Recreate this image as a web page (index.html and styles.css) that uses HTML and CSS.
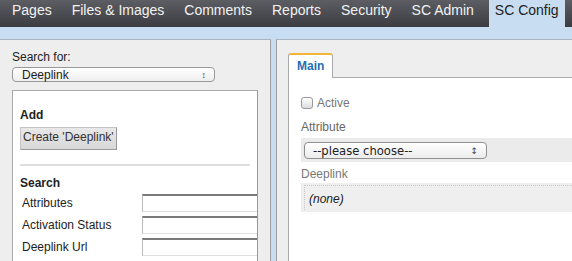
FILE: index.html
```html
<!DOCTYPE html>
<html lang="en">
<head>
    <meta charset="UTF-8">
    <meta name="viewport" content="width=device-width, initial-scale=1.0">
    <title>SC Config</title>
    <link rel="stylesheet" href="styles.css">
</head>
<body>

    <!-- Top navigation -->
    <div class="topnav">
        <a class="nav-item">Pages</a>
        <a class="nav-item">Files &amp; Images</a>
        <a class="nav-item">Comments</a>
        <a class="nav-item">Reports</a>
        <a class="nav-item">Security</a>
        <a class="nav-item">SC Admin</a>
        <a class="nav-item active">SC Config</a>
    </div>

    <div class="workspace">

        <!-- Left: search / add -->
        <div class="panel panel-left">
            <div class="field-label">Search for:</div>
            <div class="mini-select">
                <span>Deeplink</span>
                <span class="arrows">&#8597;</span>
            </div>

            <div class="box">
                <h3>Add</h3>
                <button class="btn">Create 'Deeplink'</button>
                <div class="divider"></div>
                <h3>Search</h3>
                <div class="search-row">
                    <span class="search-label">Attributes</span>
                    <span class="text-input"></span>
                </div>
                <div class="search-row">
                    <span class="search-label">Activation Status</span>
                    <span class="text-input"></span>
                </div>
                <div class="search-row">
                    <span class="search-label">Deeplink Url</span>
                    <span class="text-input"></span>
                </div>
            </div>
        </div>

        <div class="splitter"></div>

        <!-- Right: edit form -->
        <div class="panel panel-right">
            <div class="tabs">
                <div class="tab">Main</div>
            </div>
            <div class="tab-body">
                <div class="check-row">
                    <span class="checkbox"></span>
                    <span>Active</span>
                </div>

                <div class="form-label">Attribute</div>
                <div class="select-strip">
                    <div class="select">
                        <span>--please choose--</span>
                        <span class="arrows">&#8597;</span>
                    </div>
                </div>

                <div class="form-label label-deeplink">Deeplink</div>
                <div class="readonly">
                    <div class="readonly-inner">(none)</div>
                </div>
            </div>
        </div>

    </div>

</body>
</html>
```

FILE: styles.css
```css
html, body {
    margin: 0;
    height: 100%;
    overflow: hidden;
}
body {
    font-family: "Liberation Sans", Arial, sans-serif;
    font-size: 12px;
    line-height: 14px;
    color: #222;
    background: #c8ddf1;
    display: flex;
    flex-direction: column;
}

/* top navigation */
.topnav {
    height: 27px;
    display: flex;
    padding-left: 2px;
    background: linear-gradient(#5c5e63, #3b3c41);
    white-space: nowrap;
}
.nav-item {
    font-size: 14px;
    line-height: 21px;
    padding: 0 10px 6px;
    color: #f2f2f2;
}
.nav-item.active {
    margin-left: 5px;
    padding: 0 6px 6px;
    background: #c8ddf1;
    color: #222;
}

/* panels */
.workspace {
    flex: 1;
    display: flex;
    padding-top: 12px;
    min-height: 0;
}
.panel {
    background: #eeeeee;
    border-top: 1px solid #a9b6c4;
    overflow: hidden;
}
.panel-left {
    width: 246px;
    flex-shrink: 0;
    padding: 10px 12px 0 12px;
    border-right: 1px solid #a0a0a0;
}
.splitter {
    width: 5px;
    flex-shrink: 0;
}
.panel-right {
    flex: 1;
    padding: 13px 0 0 11px;
    border-left: 1px solid #a0a0a0;
    display: flex;
    flex-direction: column;
    min-width: 0;
}

/* left side */
.field-label {
    color: #222;
}
.mini-select {
    margin-top: 3px;
    width: 184px;
    height: 13px;
    padding: 0 8px 0 9px;
    border: 1px solid #9a9a9a;
    border-radius: 4px;
    background: linear-gradient(#ffffff, #eeeeee);
    display: flex;
    justify-content: space-between;
    align-items: center;
    font-size: 12px;
}
.arrows {
    font-size: 9px;
    color: #444;
}
.box {
    margin-top: 8px;
    height: 200px;
    background: #fff;
    border: 1px solid #a8a8a8;
    border-right-color: #999;
    padding: 17px 7px 0;
    overflow: hidden;
}
.box h3 {
    margin: 0;
    font-size: 12px;
    line-height: 14px;
    font-weight: bold;
}
.btn {
    margin-top: 5px;
    display: block;
    font-family: "Liberation Sans", Arial, sans-serif;
    font-size: 12px;
    line-height: 14px;
    color: #333;
    padding: 2px 2px 5px;
    background: linear-gradient(#e8e8e8, #d8d8d8);
    border: 1px solid #999;
    border-top-color: #c4c4c4;
    border-left-color: #c4c4c4;
}
.divider {
    height: 2px;
    background: #dedede;
    margin: 14px 0 10px;
}
.search-row {
    display: flex;
    align-items: center;
    height: 18px;
    margin-top: 4px;
    white-space: nowrap;
}
.search-row:first-of-type {
    margin-top: 7px;
}
.search-label {
    width: 120px;
    padding-left: 2px;
    flex-shrink: 0;
}
.text-input {
    flex-shrink: 0;
    width: 160px;
    height: 15px;
    border: 1px solid #bbb;
    border-top: 2px solid #7a7a7a;
    border-bottom-color: #e0e0e0;
    background: #fff;
}

/* right side */
.tabs {
    display: flex;
}
.tab {
    position: relative;
    margin-bottom: -1px;
    padding: 4px 8px 5px;
    font-weight: bold;
    color: #1f6db5;
    background: #fff;
    border: 1px solid #aaa;
    border-top: 2px solid #f3b53a;
    border-bottom: none;
    border-radius: 3px 3px 0 0;
}
.tab-body {
    flex: 1;
    background: #fff;
    border-top: 1px solid #aaa;
    border-left: 1px solid #aaa;
    padding: 18px 0 0 12px;
}
.check-row {
    display: flex;
    align-items: center;
    gap: 4px;
    color: #777;
}
.checkbox {
    width: 10px;
    height: 10px;
    border: 1px solid #9a9a9a;
    border-radius: 3px;
    background: linear-gradient(#ffffff, #dcdcdc);
}
.form-label {
    margin-top: 10px;
    color: #666;
}
.select-strip {
    margin-top: 4px;
    background: #ebebeb;
    padding: 4px 3px 3px;
}
.select {
    width: 165px;
    height: 15px;
    padding: 0 8px;
    border: 1px solid #8f8f8f;
    border-radius: 4px;
    background: linear-gradient(#ffffff, #ececec);
    display: flex;
    justify-content: space-between;
    align-items: center;
    font-family: "DejaVu Sans", sans-serif;
    font-size: 11.6px;
    color: #222;
}
.label-deeplink {
    margin-top: 5px;
    color: #777;
}
.readonly {
    margin-top: 2px;
    background: #efefef;
    padding: 2px 0 2px 3px;
}
.readonly-inner {
    border-top: 1px dotted #c8c8c8;
    border-left: 1px dotted #c8c8c8;
    padding: 6px 4px 4px;
    font-style: italic;
    color: #222;
}
```
